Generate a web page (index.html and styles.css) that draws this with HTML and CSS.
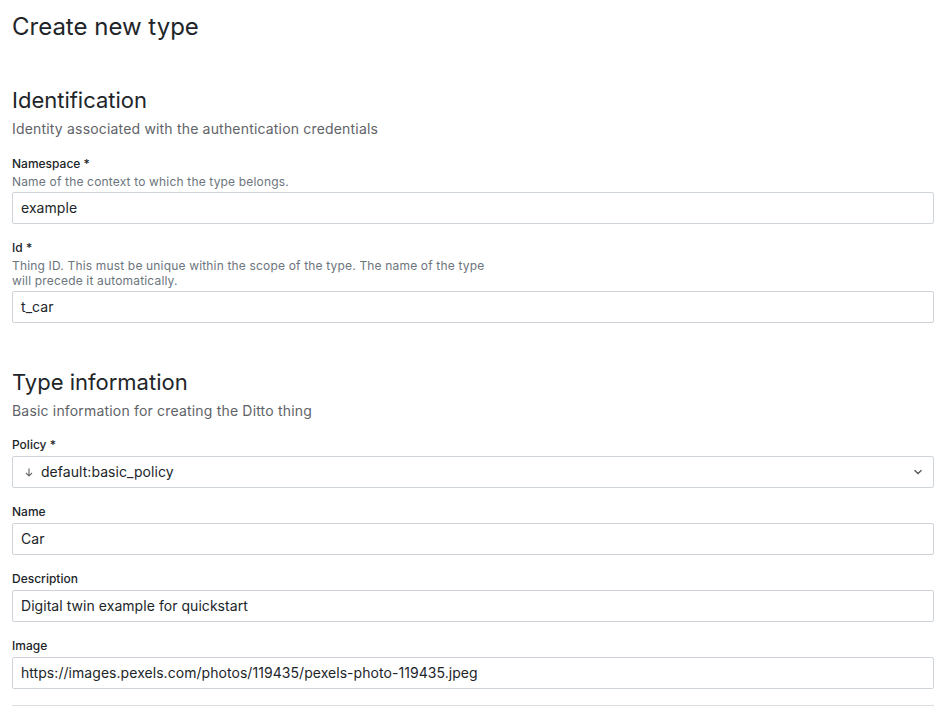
FILE: index.html
```html
<!DOCTYPE html>
<html>
<head>
<meta charset="utf-8">
<link rel="stylesheet" href="styles.css">
</head>
<body>
<div class="page">
  <h1 class="title">Create new type</h1>

  <section class="section first">
    <h2 class="sec-title">Identification</h2>
    <p class="sec-sub">Identity associated with the authentication credentials</p>

    <div class="field">
      <label class="label">Namespace *</label>
      <div class="help">Name of the context to which the type belongs.</div>
      <div class="input">example</div>
    </div>

    <div class="field">
      <label class="label">Id *</label>
      <div class="help narrow">Thing ID. This must be unique within the scope of the type. The name of the type will precede it automatically.</div>
      <div class="input">t_car</div>
    </div>
  </section>

  <section class="section second">
    <h2 class="sec-title">Type information</h2>
    <p class="sec-sub">Basic information for creating the Ditto thing</p>

    <div class="field">
      <label class="label">Policy *</label>
      <div class="input select">
        <svg class="arrow" width="8" height="9" viewBox="0 0 8 9"><path d="M4 0.5 V8 M1 5 L4 8 L7 5" fill="none" stroke="#6f6f6f" stroke-width="1.2"/></svg>
        <span class="sel-text">default:basic_policy</span>
        <svg class="chev" width="10" height="6" viewBox="0 0 10 6"><path d="M1.5 1.2 L5 4.5 L8.5 1.2" fill="none" stroke="#555" stroke-width="1.3"/></svg>
      </div>
    </div>

    <div class="field">
      <label class="label">Name</label>
      <div class="input">Car</div>
    </div>

    <div class="field">
      <label class="label">Description</label>
      <div class="input">Digital twin example for quickstart</div>
    </div>

    <div class="field">
      <label class="label">Image</label>
      <div class="input">https://images.pexels.com/photos/119435/pexels-photo-119435.jpeg</div>
    </div>
  </section>

  <hr class="divider">
</div>
</body>
</html>
```

FILE: styles.css
```css
* { box-sizing: border-box; }
html, body { margin: 0; padding: 0; background: #fff; }
body {
  font-family: Inter, "Noto Sans", "Liberation Sans", sans-serif;
  color: #212529;
}
.page {
  padding: 12px 12px 0 12px;
}
.title {
  margin: 0;
  font-size: 24px;
  font-weight: 400;
  line-height: 29px;
  color: #212529;
}
.section { margin-top: 46px; }
.sec-title {
  margin: 0;
  font-size: 22px;
  font-weight: 400;
  line-height: 27px;
  color: #212529;
}
.sec-sub {
  margin: 6px 0 0 0;
  font-size: 14px;
  line-height: 18px;
  letter-spacing: 0.18px;
  color: #5f6368;
}
.field { margin-top: 16px; }
.sec-sub + .field { margin-top: 18px; }
.second .sec-sub + .field { margin-top: 17px; }
.label {
  display: block;
  font-size: 12px;
  font-weight: 500;
  line-height: 15px;
  color: #212529;
}
.help {
  font-size: 12px;
  line-height: 15px;
  letter-spacing: 0.17px;
  color: #6c757d;
  margin-top: 3px;
}
.help.narrow { max-width: 486px; }
.input {
  margin-top: 3px;
  height: 32px;
  border: 1px solid #ced4da;
  border-radius: 2px;
  padding: 0 8px;
  font-size: 14px;
  line-height: 30px;
  letter-spacing: 0.05px;
  color: #212529;
  white-space: nowrap;
}
.help + .input { margin-top: 3px; }
.label + .input { margin-top: 4px; }
.select {
  display: flex;
  align-items: center;
  padding-left: 12px;
}
.arrow { margin-right: 8px; flex: none; }
.sel-text { flex: 1; }
.chev { margin-right: 2px; }
.divider {
  margin: 16px 0 0 0;
  border: 0;
  border-top: 1px solid #dcdcdc;
}
```
